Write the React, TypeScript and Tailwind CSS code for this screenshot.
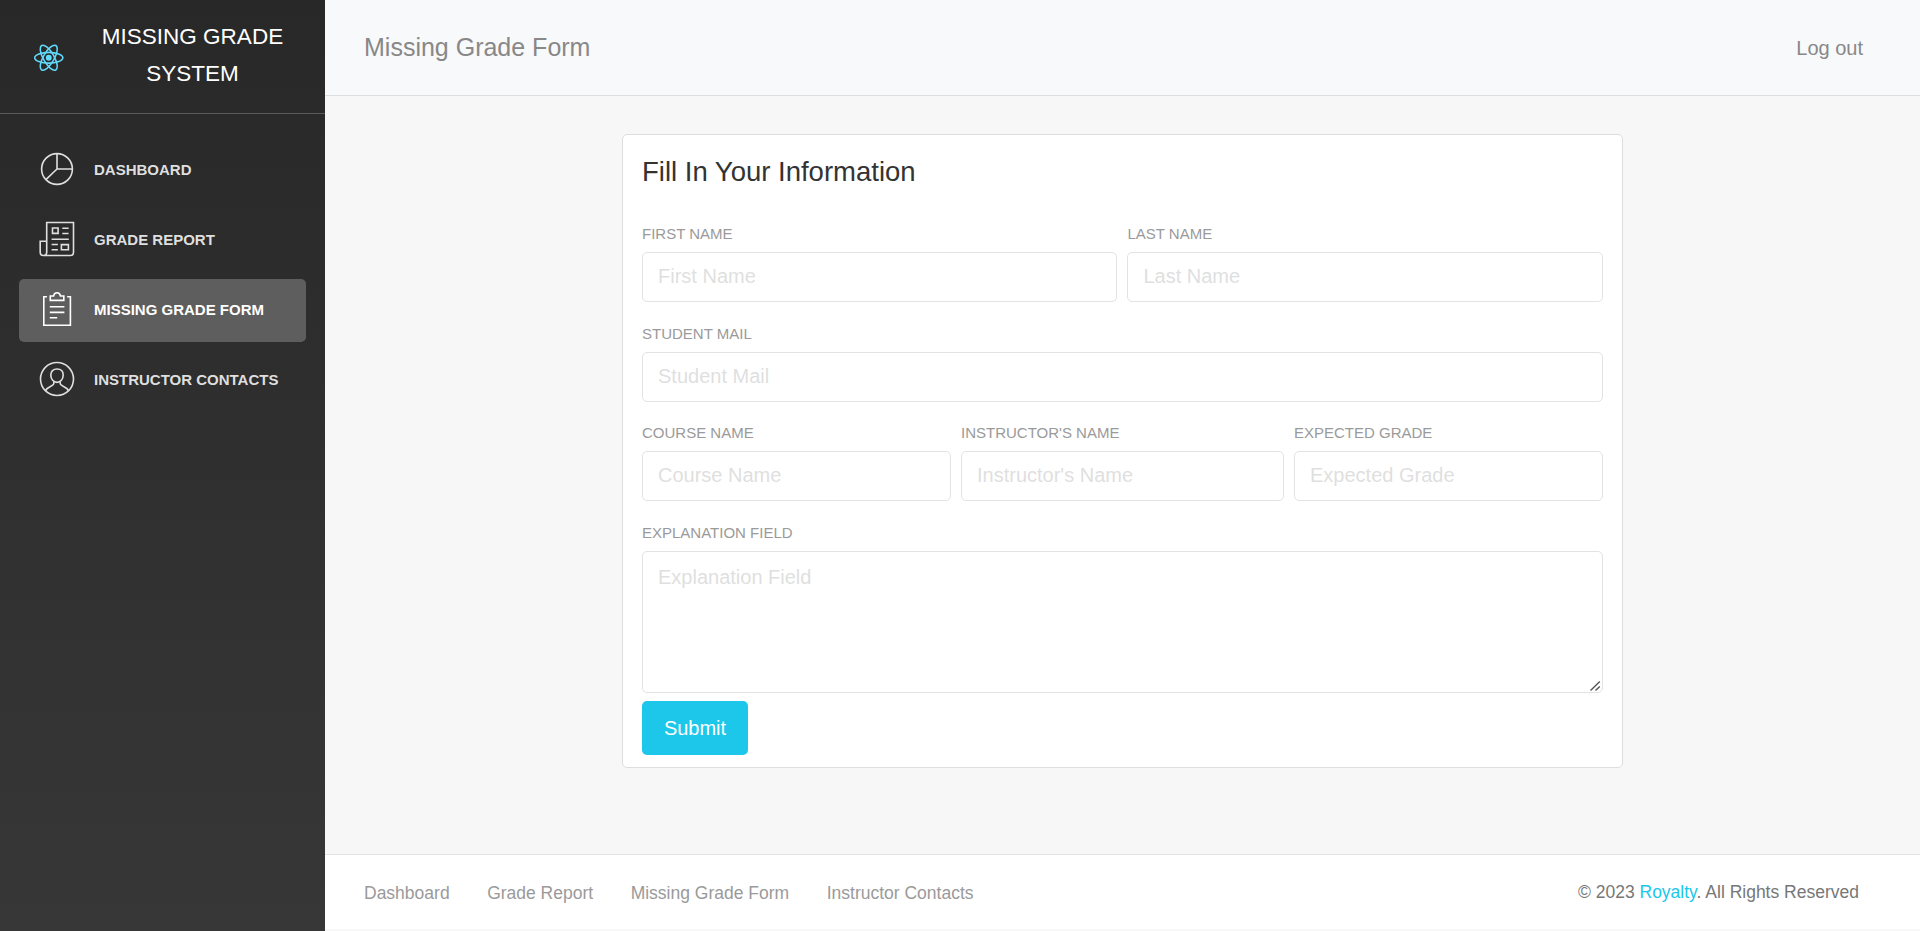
import type { ReactNode } from "react";

function ReactLogo() {
  return (
    <svg viewBox="-11.5 -11.5 23 23" className="size-[29.5px]" fill="none" stroke="#61dafb" strokeWidth="1.2">
      <circle r="2.3" fill="#61dafb" stroke="none" />
      <ellipse rx="11" ry="4.2" />
      <ellipse rx="11" ry="4.2" transform="rotate(60)" />
      <ellipse rx="11" ry="4.2" transform="rotate(120)" />
    </svg>
  );
}

function Icon({ children }: { children: ReactNode }) {
  return (
    <svg viewBox="0 0 36 36" className="mb-[3px] size-9 shrink-0" fill="none" stroke="currentColor" strokeWidth="1.6">
      {children}
    </svg>
  );
}

const navItems = [
  {
    label: "Dashboard",
    icon: (
      <Icon>
        <circle cx="18" cy="18" r="15.4" />
        <path d="M18 2.5V18H33.5M18 18L6.9 28.6" />
      </Icon>
    ),
  },
  {
    label: "Grade Report",
    icon: (
      <Icon>
        <path d="M7.7 32V1.5H34.5V31.5Q34.5 34.5 31.5 34.5H4.2Q1.2 34.5 1.2 31.5V20.2H7.7V31.5Q7.7 34.5 4.4 34.5" />
        <path d="M13.5 7h5.6v5.4h-5.6zM23.3 7.3h6.3M23.3 12.5h6.3M12.6 18.2h17.2M12.6 23.5h6.3M12.6 28.8h6.3M22.4 23.6h7v5.2h-7z" />
      </Icon>
    ),
  },
  {
    label: "Missing Grade Form",
    active: true,
    icon: (
      <Icon>
        <path d="M8 5.7H4.8V34.3H31.4V5.7H28.2" />
        <path d="M11.3 9.4V5H14.6Q15 1.8 18 1.8T21.4 5H24.8V9.4zM10.8 15.8h14.6M10.8 21.4h14.6M10.8 26.8h7.4" />
      </Icon>
    ),
  },
  {
    label: "Instructor Contacts",
    icon: (
      <Icon>
        <circle cx="18" cy="18" r="16.5" />
        <path d="M18 8C14.2 8 11.8 10.4 11.8 14C11.8 18.4 14.6 21.4 18 21.4S24.2 18.4 24.2 14C24.2 10.4 21.8 8 18 8z" />
        <path d="M14.8 20.6V22.8C14 25.6 7.6 25.4 6.4 30M21.2 20.6V22.8C22 25.6 28.4 25.4 29.6 30" />
      </Icon>
    ),
  },
];

function Field({ label, className = "", multiline }: { label: string; className?: string; multiline?: boolean }) {
  const box =
    "block w-full rounded-[5px] border border-[#e3e3e3] bg-white px-[15px] text-[20px] text-[#565656] outline-none placeholder:text-[#dfdfdf]";
  return (
    <div className={className}>
      <label className="mb-[6.3px] block h-[22.7px] text-[15px] leading-[22.7px] text-[#9a9a9a] uppercase">
        {label}
      </label>
      {multiline ? (
        <div className="relative">
          <textarea placeholder={label} className={`${box} h-[142px] resize-none pt-[10px] leading-[30px]`} />
          <svg
            viewBox="0 0 12 12"
            className="absolute right-[2px] bottom-[1px] size-3"
            stroke="#555"
            strokeWidth="1.4"
            fill="none"
          >
            <path d="M1.5 10.5L10.8 1.5M6.5 10.5L10.8 6.6" />
          </svg>
        </div>
      ) : (
        <input placeholder={label} className={`${box} h-[50px] pb-[0.6px]`} />
      )}
    </div>
  );
}

export default function App() {
  return (
    <div className="flex h-[931px] w-full overflow-hidden bg-[#f7f7f7] font-['Liberation_Sans',Arial,sans-serif]">
      <aside className="flex w-[325px] shrink-0 flex-col bg-linear-to-b from-[#282828] to-[#373737] text-white">
        <div className="flex h-[114px] items-center border-b border-[#5a5a5a]">
          <div className="mt-[2px] ml-[34px] w-[30px]">
            <ReactLogo />
          </div>
          <div className="mb-[4px] ml-[22.5px] w-[212px] text-center text-[22.5px] leading-[37px] uppercase">
            Missing Grade System
          </div>
        </div>
        <nav className="mt-[25px] flex flex-col gap-[7px] px-[19px]">
          {navItems.map((item) => (
            <a
              key={item.label}
              href="#"
              className={`flex h-[63px] items-center gap-[19px] rounded-[5px] pl-5 text-[15px] font-bold uppercase ${
                item.active ? "bg-[#5e5e5e] text-white" : "text-[#dfdfdf]"
              }`}
            >
              {item.icon}
              <span>{item.label}</span>
            </a>
          ))}
        </nav>
      </aside>
      <div className="flex min-w-0 flex-1 flex-col">
        <header className="flex h-24 shrink-0 items-center justify-between border-b border-[#dddfe2] bg-[#f8f9fb] pr-[57px] pl-[39px] text-[#888888]">
          <h1 className="text-[25px]">Missing Grade Form</h1>
          <a href="#" className="text-[20px]">
            Log out
          </a>
        </header>
        <main className="flex-1 pt-[38px]">
          <form className="mx-auto h-[634px] w-[1001px] rounded-[5px] border border-[#dedede] bg-white px-[19px]">
            <h2 className="pt-[18px] text-[27.5px] leading-[38px] text-[#333333]">Fill In Your Information</h2>
            <div className="mt-[32px] flex flex-col gap-[20.6px]">
              <div className="flex gap-[10px]">
                <Field label="First Name" className="w-[475.4px]" />
                <Field label="Last Name" className="flex-1" />
              </div>
              <Field label="Student Mail" />
              <div className="flex gap-[10px]">
                <Field label="Course Name" className="w-[309px]" />
                <Field label="Instructor's Name" className="flex-1" />
                <Field label="Expected Grade" className="w-[309px]" />
              </div>
              <Field label="Explanation Field" multiline />
            </div>
            <button
              type="button"
              className="mt-2 block h-[54px] w-[106px] rounded-[5px] bg-[#1dc7ea] text-[20px] text-white"
            >
              Submit
            </button>
          </form>
        </main>
        <footer className="mb-[2px] flex h-[75px] shrink-0 items-center justify-between border-t border-[#e4e4e4] bg-white pr-[61px] pl-[39px] text-[17.5px]">
          <nav className="flex gap-[37.5px] pt-[2px] text-[#9a9a9a]">
            <a href="#">Dashboard</a>
            <a href="#">Grade Report</a>
            <a href="#">Missing Grade Form</a>
            <a href="#">Instructor Contacts</a>
          </nav>
          <p className="text-[#777777]">
            © 2023{" "}
            <a href="#" className="text-[#1dc7ea]">
              Royalty
            </a>
            . All Rights Reserved
          </p>
        </footer>
      </div>
    </div>
  );
}
